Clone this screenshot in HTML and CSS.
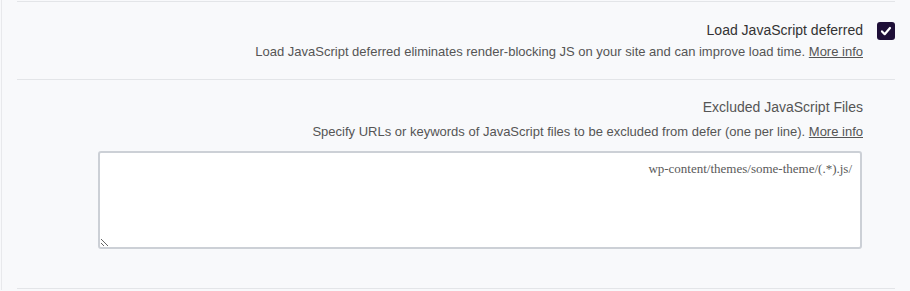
FILE: index.html
```html
<!DOCTYPE html>
<html lang="en">
<head>
    <meta charset="UTF-8">
    <meta name="viewport" content="width=device-width, initial-scale=1.0">
    <title>Defer JavaScript</title>
    <link rel="stylesheet" href="styles.css">
</head>
<body>
    <div class="settings">
        <div class="row first">
            <label class="title strong" for="deferJs">Load JavaScript deferred</label>
            <span class="check"><input type="checkbox" id="deferJs" checked>
                <svg viewBox="0 0 18 18" width="18" height="18"><rect width="18" height="18" rx="3" fill="#1e0f37"/><path d="M5 9.4l2.7 2.8L13 6" fill="none" stroke="#fff" stroke-width="2.2" stroke-linecap="round" stroke-linejoin="round"/></svg>
            </span>
            <p class="desc">Load JavaScript deferred eliminates render-blocking JS on your site and can improve load time. <a href="#">More info</a></p>
        </div>
        <div class="row">
            <label class="title" for="excludeJs">Excluded JavaScript Files</label>
            <p class="desc second">Specify URLs or keywords of JavaScript files to be excluded from defer (one per line). <a href="#">More info</a></p>
            <textarea id="excludeJs" dir="rtl">wp-content/themes/some-theme/(.*).js/</textarea>
        </div>
    </div>
</body>
</html>
```

FILE: styles.css
```css
body {
    margin: 0;
    background: #f8f9fb;
    font-family: "Liberation Sans", Arial, sans-serif;
    font-size: 14px;
    color: #555;
}
.settings {
    margin-left: 1px;
    border-left: 1px solid #e8e9ec;
    padding: 1px 0 0 15px;
    min-height: 290px;
    box-sizing: border-box;
}
.row {
    width: 878px;
    display: grid;
    grid-template-columns: 1fr 18px;
    column-gap: 14px;
    padding: 17px 0 39px;
    border-bottom: 1px solid #e3e5e8;
}
.row.first {
    border-top: 1px solid #e3e5e8;
    padding: 18px 0;
}
.title {
    grid-column: 1;
    text-align: right;
    line-height: 20px;
    font-weight: normal;
    color: #555;
}
.title.strong {
    color: #333;
}
.check {
    grid-column: 2;
    grid-row: 1;
    width: 18px;
    height: 18px;
    margin-top: 2px;
    position: relative;
}
.check input {
    position: absolute;
    opacity: 0;
    margin: 0;
    width: 18px;
    height: 18px;
}
.check svg {
    display: block;
}
.desc {
    grid-column: 1;
    margin: 3px 0 0;
    text-align: right;
    font-size: 13px;
    line-height: 18px;
    color: #555;
}
.desc.second {
    margin-top: 6px;
}
.desc a {
    color: #555;
    text-decoration: underline;
}
textarea {
    grid-column: 1;
    justify-self: end;
    width: 764px;
    height: 98px;
    margin: 10px 1px 0 0;
    box-sizing: border-box;
    padding: 8px 8px;
    border: 2px solid #ccd0d6;
    border-radius: 3px;
    background: #fff;
    font-family: "Liberation Serif", "Times New Roman", serif;
    font-size: 13px;
    line-height: 16px;
    color: #5a5a5a;
    text-align: right;
    unicode-bidi: plaintext;
}
```
